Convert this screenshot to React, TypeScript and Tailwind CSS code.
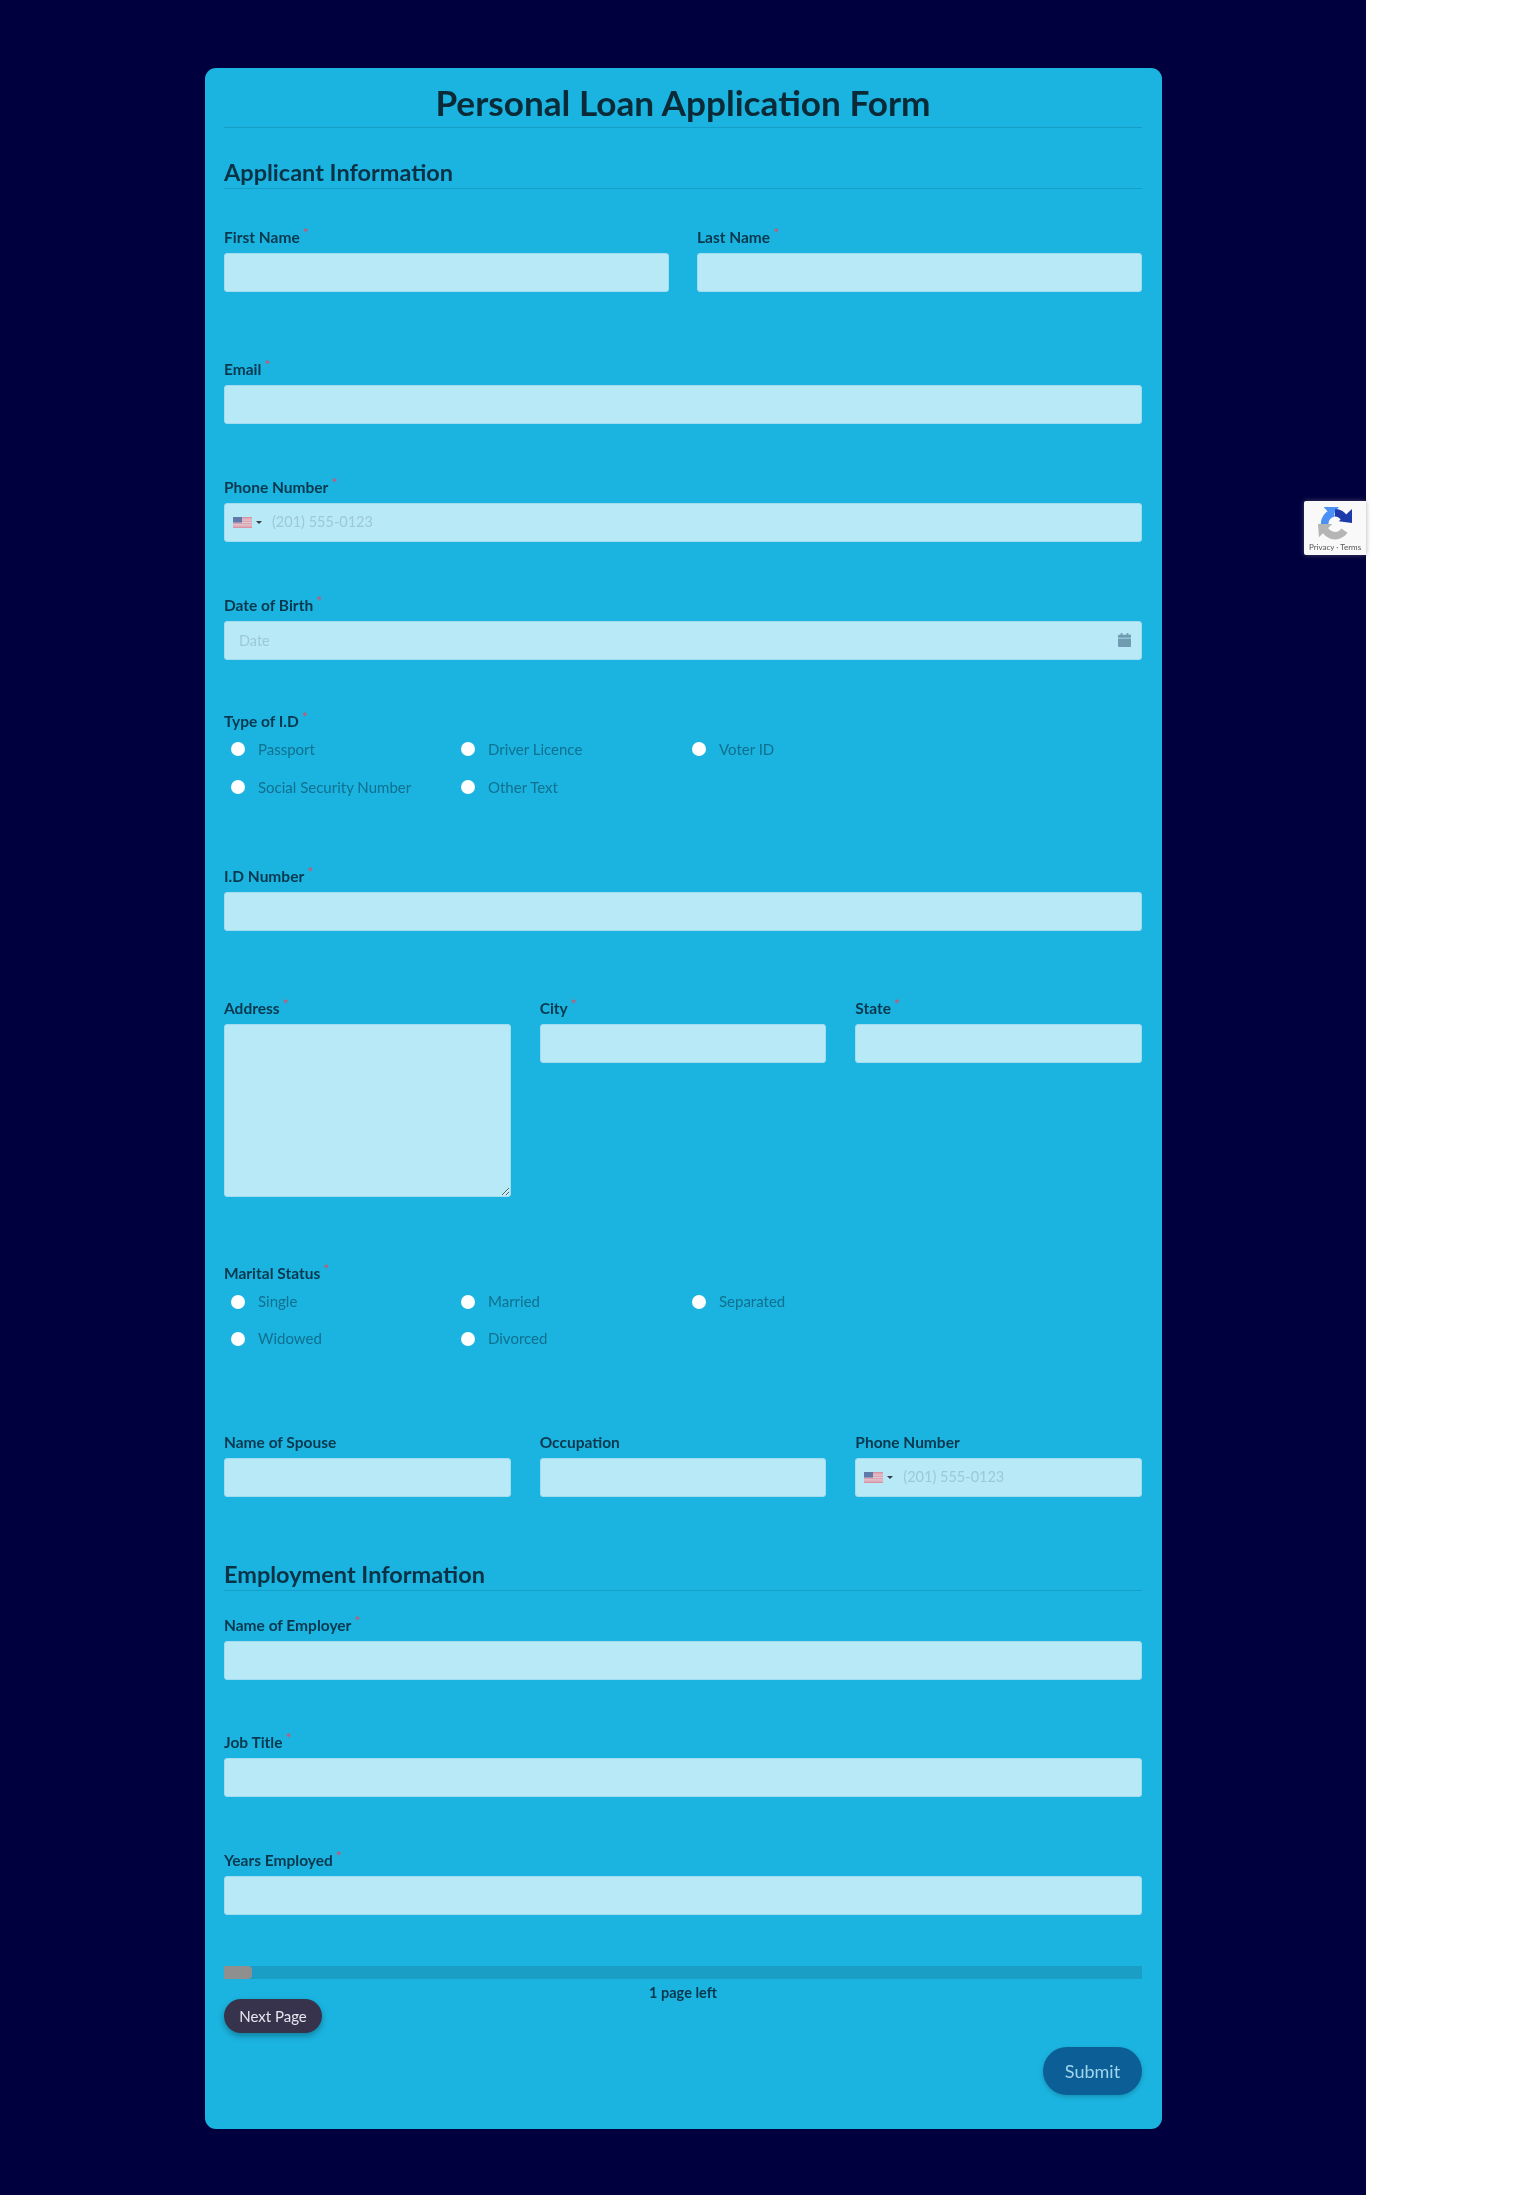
import React from "react";

const Star = () => <span className="relative -top-[5px] ml-[3px] text-[14px] font-normal leading-none text-[#e8475f]">*</span>;

function Label({ children, required = true }: { children: React.ReactNode; required?: boolean }) {
  return (
    <div className="h-5 mb-[6px] flex items-center whitespace-nowrap text-[15.5px] font-bold leading-5 text-[#08384e]">
      <span className="-mt-px">{children}{required && <Star />}</span>
    </div>
  );
}

const inputCls =
  "block w-full h-[39px] rounded-[3px] border border-[#a3dcee] bg-[#b8e9f6] px-[14px] text-[14.5px] text-[#0a3a50] outline-none placeholder:text-[#9cc8d8]";

function Field({ label, required = true, className = "" }: { label: string; required?: boolean; className?: string }) {
  return (
    <div className={className}>
      <Label required={required}>{label}</Label>
      <input readOnly className={inputCls} aria-label={label} />
    </div>
  );
}

function Flag() {
  return (
    <svg width="19" height="11" viewBox="0 0 19 11" className="shrink-0 opacity-70">
      <rect width="19" height="11" fill="#e8707f" />
      <rect y="1.7" width="19" height="0.8" fill="#f7d6dc" />
      <rect y="3.4" width="19" height="0.8" fill="#f7d6dc" />
      <rect y="5.1" width="19" height="0.8" fill="#f7d6dc" />
      <rect y="6.8" width="19" height="0.8" fill="#f7d6dc" />
      <rect y="8.5" width="19" height="0.8" fill="#f7d6dc" />
      <rect width="9" height="5.6" fill="#3d4a85" />
    </svg>
  );
}

function Phone({ label, required = true, className = "" }: { label: string; required?: boolean; className?: string }) {
  return (
    <div className={className}>
      <Label required={required}>{label}</Label>
      <div className="flex h-[39px] w-full items-center rounded-[3px] border border-[#a3dcee] bg-[#b8e9f6] pl-2">
        <Flag />
        <span className="ml-[4px] h-0 w-0 border-x-[3px] border-t-[3px] border-x-transparent border-t-[#3a3a4a]" />
        <input
          readOnly
          placeholder="(201) 555-0123"
          aria-label={label}
          className="ml-[10px] -mt-px min-w-0 flex-1 bg-transparent text-[14.5px] outline-none placeholder:text-[#9cc8d8]"
        />
      </div>
    </div>
  );
}

function Radios({ items, rowClass }: { items: string[]; rowClass: string }) {
  return (
    <div className="grid grid-cols-[230px_231px_1fr]">
      {items.map((t) => (
        <label key={t} className={`flex items-center pl-[7px] text-[15px] text-[#10708f] ${rowClass}`}>
          <span className="h-[14px] w-[14px] shrink-0 rounded-full bg-white" />
          <span className="ml-[13px] whitespace-nowrap">{t}</span>
        </label>
      ))}
    </div>
  );
}

function Section({ children, className = "" }: { children: React.ReactNode; className?: string }) {
  return (
    <h2 className={`border-b border-[#159fc8] pb-[2px] text-[23.5px] font-bold leading-7 text-[#0a3246] ${className}`}>
      {children}
    </h2>
  );
}

function Recaptcha() {
  return (
    <div className="absolute left-[1304px] top-[501px] flex h-[54px] w-[62px] flex-col items-center rounded-l-[2px] bg-[#f9f9f9] pt-[6px] shadow-[0_0_5px_rgba(120,120,120,0.6)]">
      <svg width="34" height="34" viewBox="0 0 36 36">
        <path d="M7 18 A12 12 0 0 1 17 6" fill="none" stroke="#4a90f5" strokeWidth="8" />
        <path d="M6 0 L22 0 L15 10 Z" fill="#4a90f5" />
        <path d="M18 6 A12 12 0 0 1 28 12" fill="none" stroke="#1c3aa9" strokeWidth="8" />
        <path d="M36 2 L36 17 L22 15 Z" fill="#1c3aa9" />
        <path d="M28 25 A12 12 0 0 1 6 18" fill="none" stroke="#b5b5b5" strokeWidth="8" />
        <path d="M0 18 L15 18 L1 32 Z" fill="#b5b5b5" />
      </svg>
      <span className="mt-[2px] whitespace-nowrap text-[8px] leading-[9px] text-[#555]">Privacy · Terms</span>
    </div>
  );
}

export default function App() {
  return (
    <div className="relative flex min-h-[2195px] bg-white font-['Lato','Liberation_Sans',sans-serif] blur-[0.5px]">
      <main className="h-[2195px] w-[1366px] bg-[#00003f] pl-[205px] pt-[68px]">
        <form className="flex h-[2061px] w-[957px] flex-col rounded-[11px] bg-[#1bb4e0] pl-[19px] pr-[20px]">
          <h1 className="border-b border-[#159fc8] pb-[9px] pt-[18px] text-center text-[35.2px] font-bold leading-8 text-[#0a2a38]">
            Personal Loan Application Form
          </h1>

          <Section className="mt-[30px]">Applicant Information</Section>

          <div className="mt-[38px] grid grid-cols-2 gap-x-[28px]">
            <Field label="First Name" />
            <Field label="Last Name" />
          </div>
          <Field label="Email" className="mt-[67px]" />
          <Phone label="Phone Number" className="mt-[53px]" />

          <div className="mt-[53px]">
            <Label>Date of Birth</Label>
            <div className="relative">
              <input readOnly placeholder="Date" aria-label="Date of Birth" className={inputCls} />
              <svg
                className="absolute right-[11px] top-[12px]"
                width="13"
                height="14"
                viewBox="0 0 13 14"
                fill="#6f9cb0"
              >
                <rect x="2.5" y="0" width="2" height="3" rx="1" />
                <rect x="8.5" y="0" width="2" height="3" rx="1" />
                <path d="M1 1.8h12v3H0v-2A1 1 0 0 1 1 1.8zM0 5.6h13V13a1 1 0 0 1-1 1H1a1 1 0 0 1-1-1z" />
              </svg>
            </div>
          </div>

          <div className="mt-[52px]">
            <div className="h-5 flex items-center text-[15.5px] font-bold text-[#08384e]">
              <span>Type of I.D<Star /></span>
            </div>
            <div className="-mt-[2px]">
              <Radios
                rowClass="h-[38px]"
                items={["Passport", "Driver Licence", "Voter ID", "Social Security Number", "Other Text"]}
              />
            </div>
          </div>

          <Field label="I.D Number" className="mt-[60px]" />

          <div className="mt-[67px] grid grid-cols-3 items-start gap-x-[29px]">
            <div>
              <Label>Address</Label>
              <textarea readOnly aria-label="Address" className="block h-[173px] w-full resize rounded-[3px] border border-[#a3dcee] bg-[#b8e9f6] outline-none" />
            </div>
            <Field label="City" />
            <Field label="State" />
          </div>

          <div className="mt-[67px]">
            <div className="h-5 flex items-center text-[15.5px] font-bold text-[#08384e]">
              <span>Marital Status<Star /></span>
            </div>
            <div className="-mt-[1px]">
              <Radios rowClass="h-[37px]" items={["Single", "Married", "Separated", "Widowed", "Divorced"]} />
            </div>
          </div>

          <div className="mt-[75px] grid grid-cols-3 gap-x-[29px]">
            <Field label="Name of Spouse" required={false} />
            <Field label="Occupation" required={false} />
            <Phone label="Phone Number" required={false} />
          </div>

          <Section className="mt-[63px]">Employment Information</Section>

          <Field label="Name of Employer" className="mt-[24px]" />
          <Field label="Job Title" className="mt-[52px]" />
          <Field label="Years Employed" className="mt-[53px]" />

          <div className="mt-[51px] h-[13px] bg-[#1a9ec6]">
            <div className="h-full w-[28px] rounded-r-[4px] bg-[#8f8f8f]" />
          </div>
          <div className="mt-[6px] h-4 text-center text-[14.5px] font-bold leading-4 text-[#08384e]">1 page left</div>

          <button type="button" className="-mt-[2px] h-[34px] w-[98px] rounded-full bg-[#37334d] text-[15px] text-[#e6e6ee] shadow-[0_3px_6px_rgba(0,0,0,0.3)]">
            Next Page
          </button>
          <button type="button" className="mt-[14px] h-[48px] w-[99px] self-end rounded-full bg-[#0c5e96] text-[18px] text-[#9fd6ee] shadow-[0_2px_5px_rgba(0,0,0,0.2)]">
            Submit
          </button>
        </form>
      </main>
      <Recaptcha />
    </div>
  );
}
